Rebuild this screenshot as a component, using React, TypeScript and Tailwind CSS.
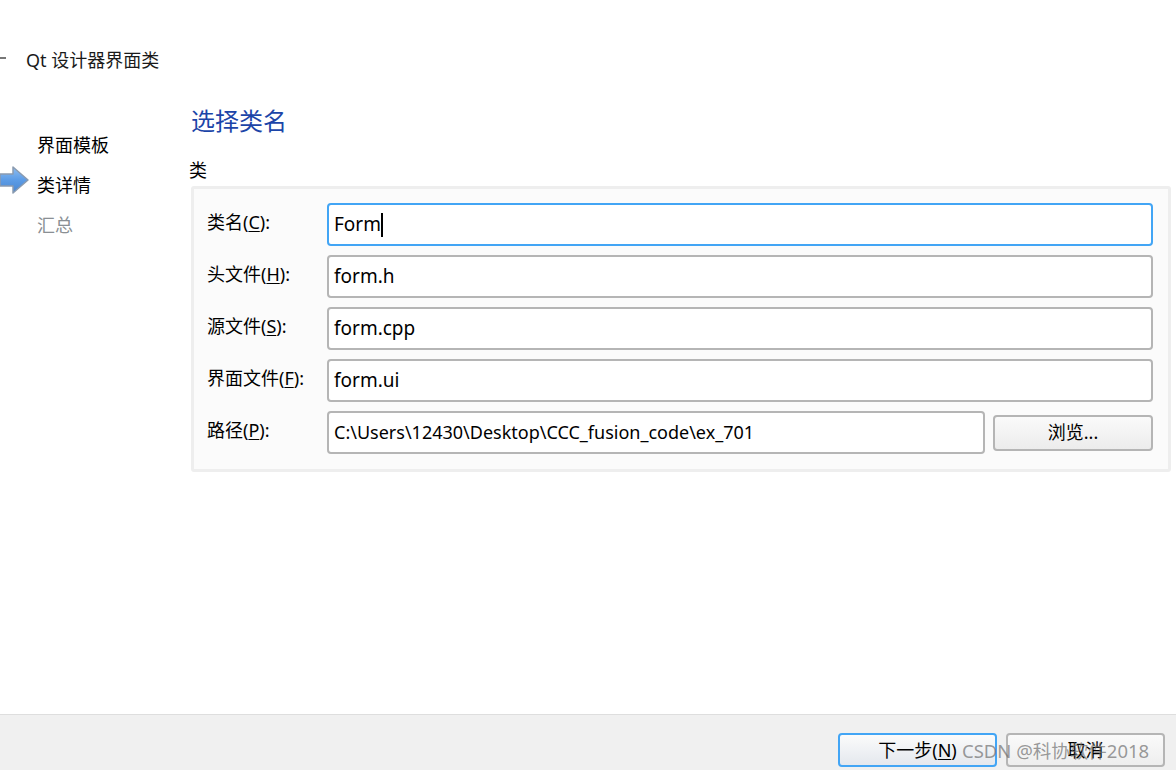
const FONT = "font-['Noto_Sans','Noto_Sans_CJK_SC',sans-serif]";

const FIELDS = [
  { label: "类名(", key: "C", value: "Form", focused: true },
  { label: "头文件(", key: "H", value: "form.h" },
  { label: "源文件(", key: "S", value: "form.cpp" },
  { label: "界面文件(", key: "F", value: "form.ui" },
];

function FieldLabel({ label, hotkey }: { label: string; hotkey: string }) {
  return (
    <div className="w-[120px] shrink-0 pb-[5px] text-[18px] leading-[24px] text-black whitespace-nowrap">
      {label}
      <span className="underline underline-offset-2">{hotkey}</span>):
    </div>
  );
}

function ArrowIcon() {
  return (
    <svg width="30" height="32" viewBox="0 0 30 32" className="absolute left-[-37px] top-[-1px]">
      <defs>
        <linearGradient id="arrowFill" x1="0" y1="0" x2="0" y2="1">
          <stop offset="0" stopColor="#8fbdf0" />
          <stop offset="0.5" stopColor="#5c9ce6" />
          <stop offset="1" stopColor="#4a86d0" />
        </linearGradient>
      </defs>
      <path d="M0 10H13V3L28 16L13 29V22H0Z" fill="url(#arrowFill)" stroke="#8a9bb0" strokeWidth="1.5" strokeLinejoin="round" />
    </svg>
  );
}

export default function App() {
  return (
    <div className={`${FONT} relative w-[1176px] h-[770px] overflow-hidden bg-white flex flex-col`}>
      <div className="h-[714px] flex flex-col">
        <div className="h-[100px] pl-[26px] pt-[47px] flex items-start relative">
          <div className="absolute left-0 top-[57px] w-[6px] h-[2px] bg-[#777777]" />
          <span className="text-[18px] leading-[26px] text-[#1a1a1a]">Qt 设计器界面类</span>
        </div>

        <div className="flex flex-1">
          <div className="w-[189px] shrink-0 pl-[37px] pt-[25px] text-[18px]">
            <div className="h-[40px] leading-[40px] text-black">界面模板</div>
            <div className="relative h-[40px] leading-[40px] text-black flex items-center">
              <ArrowIcon />
              类详情
            </div>
            <div className="h-[40px] leading-[40px] text-[#8a8f94]">汇总</div>
          </div>

          <div className="flex-1 pr-[5px]">
            <div className="pl-[2px] pt-[3px] h-[56px] text-[24px] leading-[36px] text-[#1c45a8]">选择类名</div>
            <div className="h-[30px] text-[18px] leading-[28px] text-black">类</div>
            <div className="ml-[2px] h-[286px] w-[980px] rounded-[3px] border-[3px] border-[#eeeeee] bg-[#fbfbfb] pl-[13px] pr-[15px] pt-[14px] flex flex-col gap-[9px]">
              {FIELDS.map(f => (
                <div key={f.key} className="flex items-center h-[43px]">
                  <FieldLabel label={f.label} hotkey={f.key} />
                  <div className={`flex-1 h-[43px] rounded-[4px] border-2 bg-white pl-[5px] flex items-center text-[19px] text-black ${f.focused ? "border-[#42a5f5]" : "border-[#b5b5b5]"}`}>
                    {f.value}
                    {f.focused && <span className="w-[2px] h-[24px] bg-black" />}
                  </div>
                </div>
              ))}
              <div className="flex items-center h-[43px]">
                <FieldLabel label="路径(" hotkey="P" />
                <div className="w-[658px] h-[43px] rounded-[4px] border-2 border-[#b5b5b5] bg-white pl-[5px] flex items-center text-[18px] text-black whitespace-nowrap">
                  C:\Users\12430\Desktop\CCC_fusion_code\ex_701
                </div>
                <button className="ml-[8px] w-[160px] h-[36px] rounded-[4px] border-2 border-[#b5b5b5] bg-gradient-to-b from-[#fafafa] to-[#ececec] text-[18px] text-black">
                  浏览...
                </button>
              </div>
            </div>
          </div>
        </div>
      </div>

      <div className="h-[56px] border-t border-[#dedede] bg-[#f0f0f0] flex justify-end items-start pt-[18px] pr-[11px] gap-[9px]">
        <button className="w-[159px] h-[34px] rounded-[4px] border-2 border-[#42a5f5] bg-gradient-to-b from-[#fbfbfb] to-[#e4e8ee] text-[18px] leading-[26px] text-black pl-[0px]">
          <span className="pl-[0px]">下一步(<span className="underline underline-offset-2">N</span>)</span>
        </button>
        <button className="w-[159px] h-[34px] rounded-[4px] border-2 border-[#b5b5b5] bg-gradient-to-b from-[#fafafa] to-[#eeeeee] text-[18px] leading-[26px] text-black">
          取消
        </button>
      </div>

      <div className="absolute left-[962px] top-[738px] text-[18.5px] leading-[26px] text-[#6f6f6f]/70 whitespace-nowrap">
        CSDN @科协软件2018
      </div>
    </div>
  );
}
